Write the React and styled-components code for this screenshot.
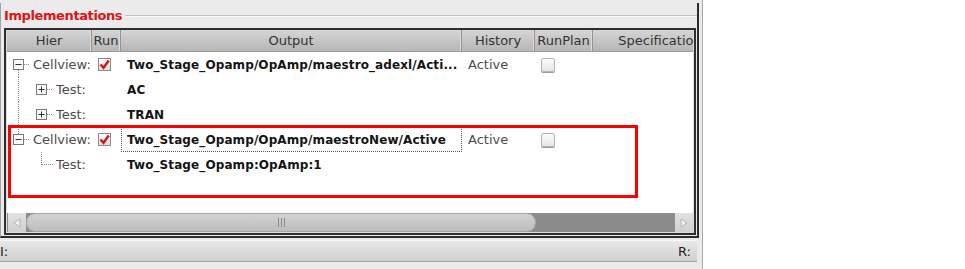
import React from 'react'
import styled, { createGlobalStyle } from 'styled-components'

const GlobalStyle = createGlobalStyle`
  html, body {
    margin: 0;
    padding: 0;
    background: #fff;
  }
  body {
    font-family: "DejaVu Sans", "Liberation Sans", sans-serif;
    font-size: 13px;
  }
`

const Page = styled.div`
  display: flex;
  height: 269px;
  overflow: hidden;
`

const Dialog = styled.div`
  width: 702px;
  height: 269px;
  background: #ebebeb;
  border-right: 1px solid #a9a9a9;
  display: flex;
  flex-direction: column;
`

const Group = styled.div`
  margin-top: 3px;
  width: 696px;
  height: 233px;
  border-left: 1px solid #a2a2a2;
  border-right: 2px solid #2c2c2c;
  border-bottom: 2px solid #2c2c2c;
  display: flex;
  flex-direction: column;
`

const TitleRow = styled.div`
  height: 25px;
  display: flex;
  align-items: center;
  gap: 3px;
`

const Title = styled.span`
  margin-left: 3px;
  color: #e0121a;
  font-weight: bold;
  font-size: 13px;
  letter-spacing: -0.4px;
`

const TitleLine = styled.div`
  flex: 1;
  height: 0;
  margin-top: 1px;
  border-top: 1px solid #c2c2c2;
  border-bottom: 1px solid #fbfbfb;
`

const Frame = styled.div`
  margin-left: 3px;
  width: 686px;
  height: 202px;
  border: 2px solid #2e2e2e;
  padding: 0 1px 1px 1px;
  background: #dcdcdc;
  display: flex;
  flex-direction: column;
`

const Viewport = styled.div`
  position: relative;
  flex: 1;
  background: #fff;
  display: flex;
  flex-direction: column;
  overflow: hidden;
`

const columns = '85px 29px 341px 73px 58px 134px'

const Header = styled.div`
  display: grid;
  grid-template-columns: ${columns};
  height: 22px;
  background: linear-gradient(#d6d6d6, #c2c2c2 60%, #b6b6b6);
  border-bottom: 1px solid #9c9c9c;
  box-sizing: border-box;
`

const HeaderCell = styled.div`
  display: flex;
  align-items: center;
  justify-content: center;
  color: #333;
  white-space: nowrap;
  overflow: hidden;
  border-right: ${(p) => (p.$last ? 'none' : '1px solid #939393')};
  box-shadow: ${(p) => (p.$last ? 'none' : 'inset -2px 0 0 -1px #dcdcdc')};
`

const Body = styled.div`
  flex: 1;
`

const Row = styled.div`
  display: grid;
  grid-template-columns: ${columns};
  height: 25px;
`

const HierCell = styled.div`
  display: flex;
  align-items: center;
  white-space: nowrap;
`

const Label = styled.span`
  margin-left: 3px;
  color: #4a4a4a;
`

const CheckCell = styled.div`
  display: flex;
  align-items: center;
  padding-left: 6px;
`

const OutputCell = styled.div`
  display: flex;
  align-items: center;
  padding-left: 6px;
  font-weight: bold;
  font-size: 12px;
  letter-spacing: 0.1px;
  color: #141414;
  white-space: nowrap;
  overflow: hidden;
  outline: ${(p) => (p.$focused ? '1px dotted #555' : 'none')};
  outline-offset: -1px;
`

const TextCell = styled.div`
  display: flex;
  align-items: center;
  padding-left: 6px;
  color: #4a4a4a;
`

const RunBox = styled.span`
  width: 13px;
  height: 13px;
  box-sizing: border-box;
  border: 1px solid #8c8c8c;
  background: linear-gradient(#ffffff, #dedede);
  display: flex;
  align-items: center;
  justify-content: center;
  margin-top: -1px;
`

const PlanBox = styled.span`
  width: 14px;
  height: 14px;
  box-sizing: border-box;
  border: 1px solid #b4b4b4;
  border-radius: 2px;
  background: linear-gradient(#fcfcfc, #e4e4e4);
  box-shadow: 0 1px 0 #9a9a9a;
  margin-top: 1px;
`

const Highlight = styled.div`
  position: absolute;
  left: 1px;
  top: 95px;
  width: 630px;
  height: 73px;
  box-sizing: border-box;
  border: 3px solid #ff0000;
  pointer-events: none;
`

const ScrollBar = styled.div`
  height: 19px;
  display: flex;
  padding-left: 1px;
  background: #8c8c8c;
`

const Arrow = styled.div`
  width: 18px;
  background: linear-gradient(#e2e2e2, #cfcfcf);
  display: flex;
  align-items: center;
  justify-content: center;
`

const Thumb = styled.div`
  width: 510px;
  box-sizing: border-box;
  border: 1px solid #a6a6a6;
  border-radius: 9px;
  background: linear-gradient(#d2d2d2, #bdbdbd);
  display: flex;
  align-items: center;
  justify-content: center;
  gap: 2px;
`

const Grip = styled.span`
  width: 1px;
  height: 9px;
  background: #8a8a8a;
`

const Track = styled.div`
  flex: 1;
  background: #8b8b8b;
`

const StatusBar = styled.div`
  margin-top: 2px;
  width: 697px;
  height: 22px;
  box-sizing: border-box;
  background: linear-gradient(#e8e8e8, #d0d0d0);
  border-top: 1px solid #f6f6f6;
  border-bottom: 1px solid #a4a4a4;
  display: flex;
  align-items: center;
  justify-content: space-between;
  padding-right: 6px;
  color: #222;
`

const Branch = ({ line, box }) => {
  const dot = { stroke: '#8a8a8a', strokeWidth: 1, strokeDasharray: '1 1' }
  return (
    <svg width="23" height="25" viewBox="0 0 23 25" style={{ flex: 'none' }}>
      {line === 'full' && <line x1="11.5" y1="0" x2="11.5" y2="25" {...dot} />}
      {line === 'down' && <line x1="11.5" y1="18" x2="11.5" y2="25" {...dot} />}
      {line === 'up' && <line x1="11.5" y1="0" x2="11.5" y2="7" {...dot} />}
      {line === 'corner' && (
        <>
          <line x1="11.5" y1="0" x2="11.5" y2="13" {...dot} />
          <line x1="12" y1="12.5" x2="23" y2="12.5" {...dot} />
        </>
      )}
      {box && (
        <>
          <line x1="17" y1="12.5" x2="23" y2="12.5" {...dot} />
          <rect x="6.5" y="7.5" width="10" height="10" fill="#fafafa" stroke="#7a7a7a" />
          <line x1="8.5" y1="12.5" x2="14.5" y2="12.5" stroke="#333" />
          {box === 'plus' && <line x1="11.5" y1="9.5" x2="11.5" y2="15.5" stroke="#333" />}
        </>
      )}
    </svg>
  )
}

const Check = () => (
  <svg width="11" height="11" viewBox="0 0 11 11">
    <path d="M1.5 5.5 L4.5 8.8 L9.8 1.5" fill="none" stroke="#d8121a" strokeWidth="2.4" />
  </svg>
)

const ArrowIcon = ({ dir }) => (
  <svg width="8" height="10" viewBox="0 0 8 10">
    <polygon
      points={dir === 'left' ? '7,1 1,5 7,9' : '1,1 7,5 1,9'}
      fill="#f4f4f4"
      stroke="#b2b2b2"
    />
  </svg>
)

const rows = [
  { gutters: [{ line: 'down', box: 'minus' }], label: 'Cellview:', run: true, output: 'Two_Stage_Opamp/OpAmp/maestro_adexl/Acti...', history: 'Active', plan: true },
  { gutters: [{ line: 'full' }, { box: 'plus' }], label: 'Test:', output: 'AC' },
  { gutters: [{ line: 'full' }, { box: 'plus' }], label: 'Test:', output: 'TRAN' },
  { gutters: [{ line: 'up', box: 'minus' }], label: 'Cellview:', run: true, output: 'Two_Stage_Opamp/OpAmp/maestroNew/Active', history: 'Active', plan: true, focused: true },
  { gutters: [{}, { line: 'corner' }], label: 'Test:', output: 'Two_Stage_Opamp:OpAmp:1' },
]

const headers = ['Hier', 'Run', 'Output', 'History', 'RunPlan', 'Specification']

export default function App() {
  return (
    <Page>
      <GlobalStyle />
      <Dialog>
        <Group>
          <TitleRow>
            <Title>Implementations</Title>
            <TitleLine />
          </TitleRow>
          <Frame>
            <Viewport>
              <Header>
                {headers.map((h, i) => (
                  <HeaderCell key={h} $last={i === headers.length - 1}>{h}</HeaderCell>
                ))}
              </Header>
              <Body>
                {rows.map((r, i) => (
                  <Row key={i}>
                    <HierCell>
                      {r.gutters.map((g, j) => (
                        <Branch key={j} line={g.line} box={g.box} />
                      ))}
                      <Label>{r.label}</Label>
                    </HierCell>
                    <CheckCell>{r.run && <RunBox><Check /></RunBox>}</CheckCell>
                    <OutputCell $focused={r.focused}>{r.output}</OutputCell>
                    <TextCell>{r.history}</TextCell>
                    <CheckCell>{r.plan && <PlanBox />}</CheckCell>
                    <TextCell />
                  </Row>
                ))}
              </Body>
              <ScrollBar>
                <Arrow><ArrowIcon dir="left" /></Arrow>
                <Thumb><Grip /><Grip /><Grip /></Thumb>
                <Track />
                <Arrow><ArrowIcon dir="right" /></Arrow>
              </ScrollBar>
              <Highlight />
            </Viewport>
          </Frame>
        </Group>
        <StatusBar>
          <span>I:</span>
          <span>R:</span>
        </StatusBar>
      </Dialog>
    </Page>
  )
}
